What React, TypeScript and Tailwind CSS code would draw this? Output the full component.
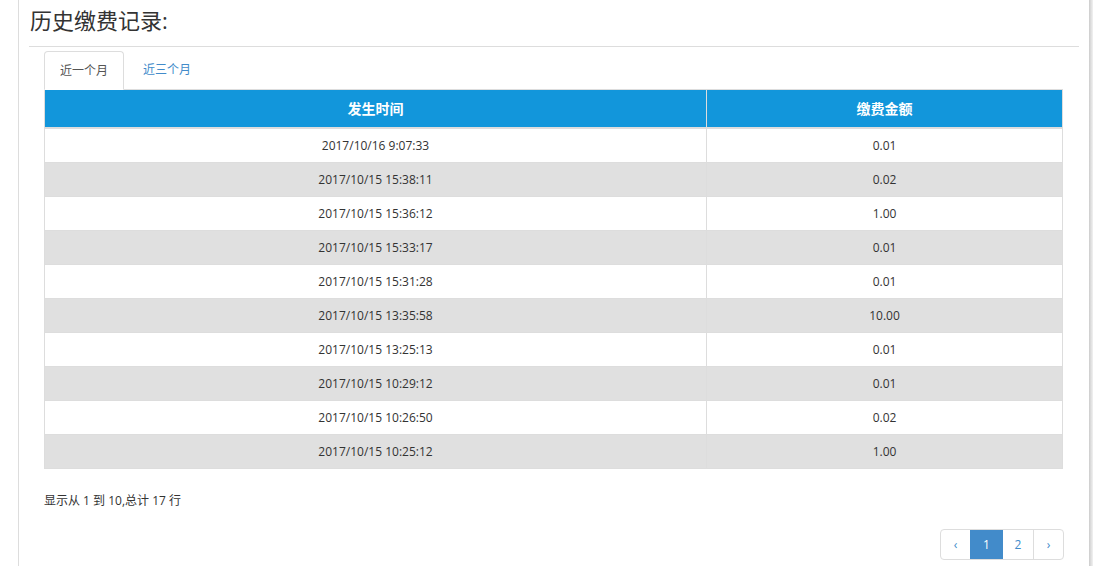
const rows = [
  ["2017/10/16 9:07:33", "0.01"],
  ["2017/10/15 15:38:11", "0.02"],
  ["2017/10/15 15:36:12", "1.00"],
  ["2017/10/15 15:33:17", "0.01"],
  ["2017/10/15 15:31:28", "0.01"],
  ["2017/10/15 13:35:58", "10.00"],
  ["2017/10/15 13:25:13", "0.01"],
  ["2017/10/15 10:29:12", "0.01"],
  ["2017/10/15 10:26:50", "0.02"],
  ["2017/10/15 10:25:12", "1.00"],
];

export default function App() {
  return (
    <div
      className="w-[1105px] h-[566px] bg-white overflow-hidden flex text-[#333]"
      style={{ fontFamily: '"Open Sans", "Noto Sans CJK SC", sans-serif' }}
    >
      <div className="w-[18px] shrink-0" />
      <div className="w-[1071px] shrink-0 border-l border-[#ddd] h-full flex flex-col">
        {/* title */}
        <div className="h-[46px] pl-[11px] flex items-center">
          <h2 className="text-[22px] leading-none pb-[6px]">历史缴费记录:</h2>
        </div>
        <div className="ml-[10px] mr-[10px] border-t border-[#ddd]" />

        <div className="pl-[25px] pr-[26px] pt-[4px]">
          {/* tabs */}
          <div className="flex h-[39px] border-b border-[#ddd]">
            <div className="w-[80px] h-[39px] border border-[#ddd] border-b-white rounded-t-[4px] bg-white flex items-center justify-center text-[12px] text-[#555] -mb-px">
              近一个月
            </div>
            <div className="w-[86px] flex items-center justify-center text-[12px] text-[#428bca]">
              近三个月
            </div>
          </div>

          {/* table */}
          <div className="border-l border-r border-[#ddd] text-[12px]">
            <div className="flex h-[37px] bg-[#1296db] text-white text-[14px] font-bold border-b-2 border-[#ddd] box-content">
              <div className="w-[662px] flex items-center justify-center border-r border-[#ddd]">发生时间</div>
              <div className="flex-1 flex items-center justify-center">缴费金额</div>
            </div>
            {rows.map((r, i) => (
              <div
                key={i}
                className={`flex h-[34px] border-b border-[#ddd] ${i % 2 === 1 ? "bg-[#e0e0e0]" : "bg-white"}`}
              >
                <div className="w-[662px] flex items-center justify-center border-r border-[#ddd]">{r[0]}</div>
                <div className="flex-1 flex items-center justify-center">{r[1]}</div>
              </div>
            ))}
          </div>

          <div className="mt-[23px] text-[12px] leading-[17px]">显示从 1 到 10,总计 17 行</div>

          <div className="flex justify-end mt-[20px] -mr-px">
            <div className="flex h-[31px] border border-[#ddd] rounded-[4px] text-[12px] text-[#428bca] overflow-hidden">
              <div className="w-[29px] flex items-center justify-center">‹</div>
              <div className="w-[33px] flex items-center justify-center bg-[#428bca] text-white">1</div>
              <div className="w-[31px] flex items-center justify-center border-r border-[#ddd]">2</div>
              <div className="w-[29px] flex items-center justify-center">›</div>
            </div>
          </div>
        </div>
      </div>
      <div className="w-[4px] shrink-0 h-full bg-gradient-to-r from-[#ccc] to-[#f2f2f2]" />
    </div>
  );
}
